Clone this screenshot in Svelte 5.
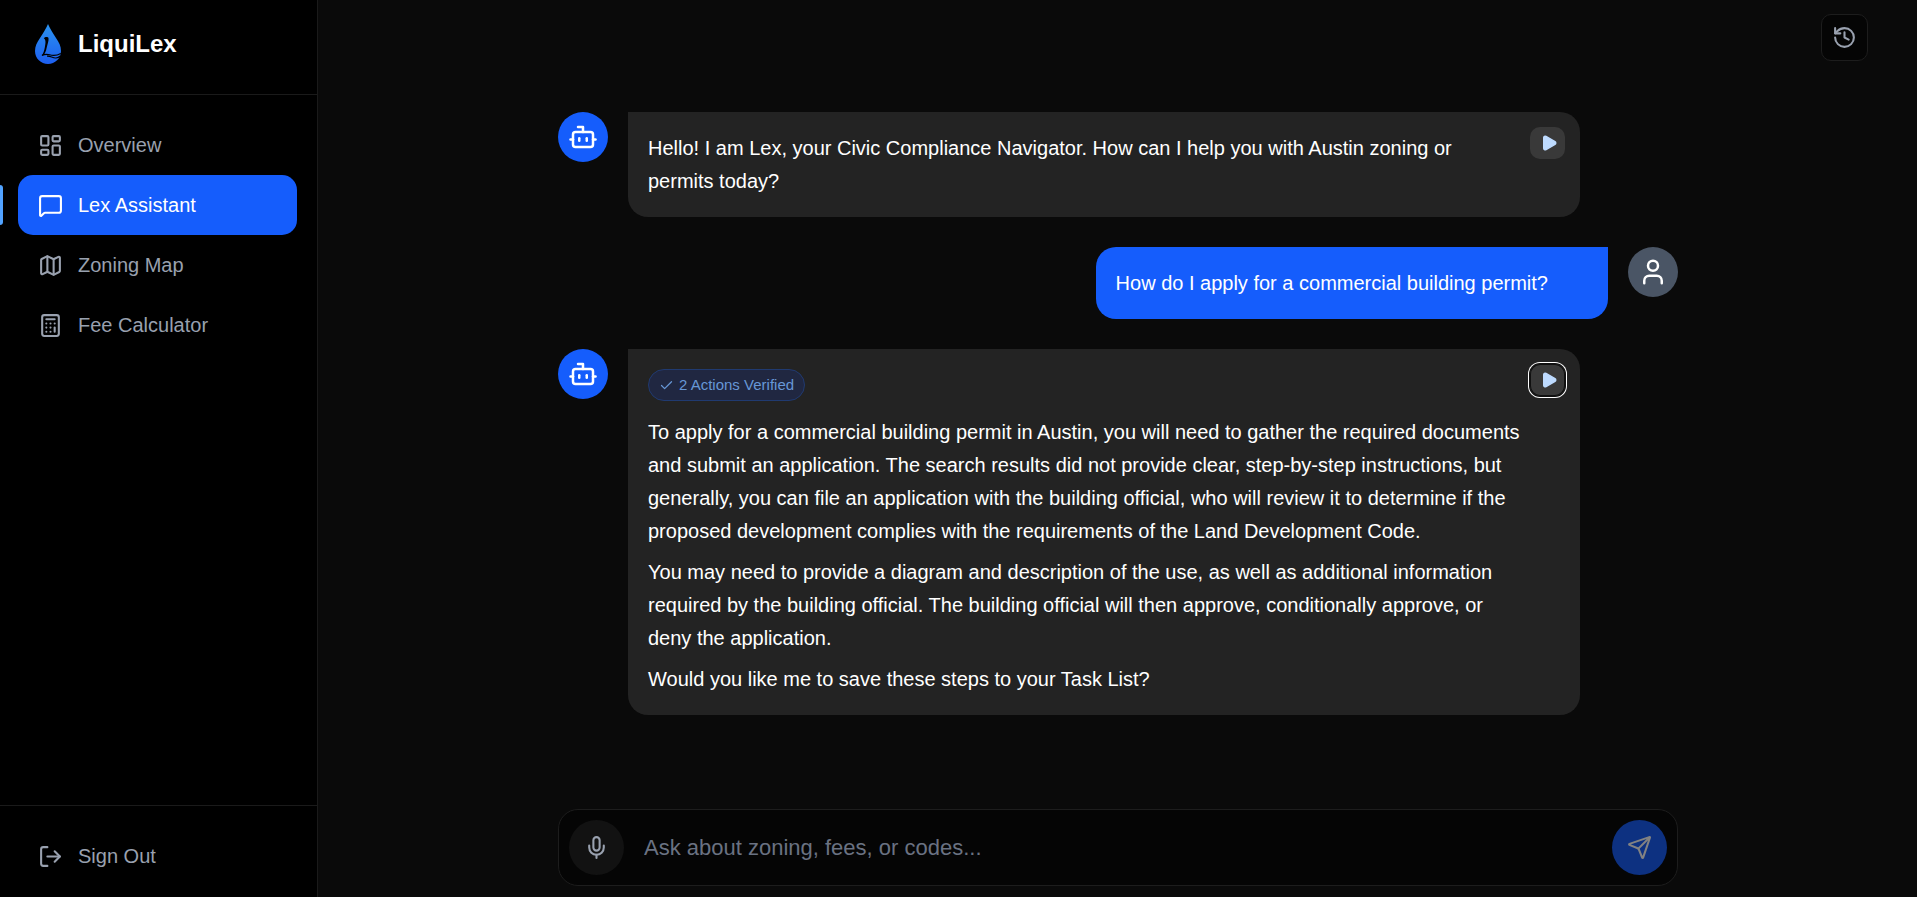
<script>
  const icons = {
    overview:
      '<rect width="7" height="9" x="3" y="3" rx="1"/><rect width="7" height="5" x="14" y="3" rx="1"/><rect width="7" height="9" x="14" y="12" rx="1"/><rect width="7" height="5" x="3" y="16" rx="1"/>',
    chat: '<path d="M22 17a2 2 0 0 1-2 2H6.828a2 2 0 0 0-1.414.586l-2.202 2.202A.71.71 0 0 1 2 21.286V5a2 2 0 0 1 2-2h16a2 2 0 0 1 2 2z"/>',
    map: '<path d="M14.106 5.553a2 2 0 0 0 1.788 0l3.659-1.83A1 1 0 0 1 21 4.619v12.764a1 1 0 0 1-.553.894l-4.553 2.277a2 2 0 0 1-1.788 0l-4.212-2.106a2 2 0 0 0-1.788 0l-3.659 1.83A1 1 0 0 1 3 19.381V6.618a1 1 0 0 1 .553-.894l4.553-2.277a2 2 0 0 1 1.788 0z"/><path d="M15 5.764v15"/><path d="M9 3.236v15"/>',
    calculator:
      '<rect width="16" height="20" x="4" y="2" rx="2"/><path d="M8 6h8"/><path d="M16 14v4"/><path d="M16 10h.01"/><path d="M12 10h.01"/><path d="M8 10h.01"/><path d="M12 14h.01"/><path d="M8 14h.01"/><path d="M12 18h.01"/><path d="M8 18h.01"/>',
    logout:
      '<path d="M9 21H5a2 2 0 0 1-2-2V5a2 2 0 0 1 2-2h4"/><path d="m16 17 5-5-5-5"/><path d="M21 12H9"/>',
    history:
      '<path d="M3 12a9 9 0 1 0 9-9 9.75 9.75 0 0 0-6.74 2.74L3 8"/><path d="M3 3v5h5"/><path d="M12 7v5l4 2"/>',
    bot: '<path d="M12 8V4H8"/><rect width="16" height="12" x="4" y="8" rx="2"/><path d="M2 14h2"/><path d="M20 14h2"/><path d="M15 13v2"/><path d="M9 13v2"/>',
    user: '<path d="M19 21v-2a4 4 0 0 0-4-4H9a4 4 0 0 0-4 4v2"/><circle cx="12" cy="7" r="4"/>',
    play: '<path fill="currentColor" d="M5 5a2 2 0 0 1 3.008-1.728l11.997 6.998a2 2 0 0 1 .003 3.458l-12 7A2 2 0 0 1 5 19z"/>',
    check: '<path d="M20 6 9 17l-5-5"/>',
    mic: '<path d="M12 19v3"/><path d="M19 10v2a7 7 0 0 1-14 0v-2"/><rect x="9" y="2" width="6" height="13" rx="3"/>',
    send: '<path d="M14.536 21.686a.5.5 0 0 0 .937-.024l6.5-19a.496.496 0 0 0-.635-.635l-19 6.5a.5.5 0 0 0-.024.937l7.93 3.18a2 2 0 0 1 1.112 1.11z"/><path d="m21.854 2.147-10.94 10.939"/>'
  };

  const nav = [
    { label: 'Overview', icon: 'overview' },
    { label: 'Lex Assistant', icon: 'chat' },
    { label: 'Zoning Map', icon: 'map' },
    { label: 'Fee Calculator', icon: 'calculator' }
  ];
  let current = $state('Lex Assistant');
  let draft = $state('');

  const messages = [
    {
      from: 'bot',
      text: [
        'Hello! I am Lex, your Civic Compliance Navigator. How can I help you with Austin zoning or permits today?'
      ]
    },
    { from: 'user', text: ['How do I apply for a commercial building permit?'] },
    {
      from: 'bot',
      badge: '2 Actions Verified',
      focused: true,
      text: [
        'To apply for a commercial building permit in Austin, you will need to gather the required documents and submit an application. The search results did not provide clear, step-by-step instructions, but generally, you can file an application with the building official, who will review it to determine if the proposed development complies with the requirements of the Land Development Code.',
        'You may need to provide a diagram and description of the use, as well as additional information required by the building official. The building official will then approve, conditionally approve, or deny the application.',
        'Would you like me to save these steps to your Task List?'
      ]
    }
  ];
</script>

{#snippet icon(name, size = 25)}
  <svg
    width={size}
    height={size}
    viewBox="0 0 24 24"
    fill="none"
    stroke="currentColor"
    stroke-width="2"
    stroke-linecap="round"
    stroke-linejoin="round"
    aria-hidden="true">{@html icons[name]}</svg>
{/snippet}

<div class="app">
  <aside class="sidebar">
    <div class="brand">
      <svg width="26" height="40" viewBox="0 0 26 40" aria-hidden="true">
        <defs>
          <linearGradient id="drop" x1="0" y1="0" x2="0" y2="1">
            <stop offset="0" stop-color="#2b93f0" />
            <stop offset="1" stop-color="#1d5ff0" />
          </linearGradient>
        </defs>
        <path
          fill="url(#drop)"
          d="M13 0C15 5 18 9 21 14C24 18.500 26 22 26 27C26 34.500 20 40 13 40C6 40 0 34.500 0 27C0 22 2 18.500 5 14C8 9 11 5 13 0Z" />
        <path
          fill="#000"
          d="M8.800 14.200C10 12.700 12.800 12.400 13.500 14C14 17 12.300 20.500 11.600 24C11 27 10 29.500 8.600 31L6.600 31.800C8.300 29.500 9.300 26.500 9.800 23.500C10.400 20 11.400 16 8.800 14.200Z" />
        <path
          fill="none"
          stroke="#000"
          stroke-width="1.200"
          d="M7 31.400C9.500 30.200 12 30 14.500 30.800C18.500 32 22 31.600 25.800 29.400M12 32.100C15.500 31.600 17.500 34.300 21 34C22.800 33.800 24 33.200 25.300 32" />
      </svg>
      <span>LiquiLex</span>
    </div>

    <nav aria-label="Main">
      {#each nav as item}
        <a
          href="#{item.icon}"
          class="item"
          class:active={item.label === current}
          aria-current={item.label === current ? 'page' : undefined}
          onclick={() => (current = item.label)}>
          {@render icon(item.icon)}
          <span>{item.label}</span>
        </a>
      {/each}
    </nav>

    <div class="foot">
      <button type="button" class="item">
        {@render icon('logout')}
        <span>Sign Out</span>
      </button>
    </div>
  </aside>

  <main>
    <header>
      <button type="button" class="history" aria-label="Chat history">{@render icon('history')}</button>
    </header>

    <section class="chat" aria-label="Conversation">
      {#each messages as m}
        <article class="message {m.from}">
          <div class="avatar">{@render icon(m.from, 30)}</div>
          <div class="bubble">
            {#if m.badge}
              <div class="badge">{@render icon('check', 15)}<span>{m.badge}</span></div>
            {/if}
            <div class="text">
              {#each m.text as p}<p>{p}</p>{/each}
            </div>
            {#if m.from === 'bot'}
              <button type="button" class="play" class:focused={m.focused} aria-label="Play message">
                {@render icon('play', 18)}
              </button>
            {/if}
          </div>
        </article>
      {/each}
    </section>

    <form class="composer" onsubmit={(e) => e.preventDefault()}>
      <button type="button" class="round mic" aria-label="Voice input">{@render icon('mic')}</button>
      <input
        type="text"
        aria-label="Message"
        placeholder="Ask about zoning, fees, or codes..."
        bind:value={draft} />
      <button type="submit" class="round send" aria-label="Send" disabled={!draft}>
        {@render icon('send')}
      </button>
    </form>
  </main>
</div>

<style>
  :global(body) {
    background: #0a0a0a;
  }
  .app,
  .app * {
    box-sizing: border-box;
  }
  .app {
    display: grid;
    grid-template-columns: 318px minmax(0, 1fr);
    column-gap: 1px;
    min-height: 100vh;
    color: #fff;
    font: 20px/30px 'Liberation Sans', Arial, sans-serif;
  }
  svg {
    display: block;
    flex: none;
  }
  button,
  input {
    margin: 0;
    padding: 0;
    border: 0;
    background: none;
    color: inherit;
    font: inherit;
  }
  button {
    cursor: pointer;
  }

  .sidebar {
    display: flex;
    flex-direction: column;
    background: #000;
    border-right: 1px solid #1a1a1a;
  }
  .brand {
    display: flex;
    align-items: center;
    gap: 17px;
    height: 95px;
    padding: 0 35px 6px;
    border-bottom: 1px solid #1a1a1a;
    font-size: 24px;
    font-weight: 700;
  }
  nav {
    flex: 1;
    padding: 20px 20px 20px 18px;
  }
  .item {
    position: relative;
    display: flex;
    align-items: center;
    gap: 15px;
    width: 100%;
    height: 60px;
    padding: 0 20px;
    border-radius: 15px;
    color: #99a1af;
    text-align: left;
    text-decoration: none;
  }
  .active {
    background: #155dfc;
    color: #fff;
  }
  .active::before {
    content: '';
    position: absolute;
    left: -18px;
    top: 10px;
    width: 3px;
    height: 40px;
    border-radius: 0 3px 3px 0;
    background: #51a2ff;
  }
  .foot {
    padding: 20px 20px 11px 18px;
    border-top: 1px solid #1a1a1a;
  }

  main {
    display: flex;
    flex-direction: column;
  }
  header {
    display: flex;
    justify-content: flex-end;
    padding: 14px 49px 0;
  }
  .history {
    display: grid;
    place-items: center;
    width: 47px;
    height: 47px;
    border: 1px solid #1d1d1d;
    border-radius: 10px;
    background: #050505;
    color: #99a1af;
  }
  .chat {
    flex: 1;
    display: flex;
    flex-direction: column;
    gap: 30px;
    width: 100%;
    max-width: 1120px;
    margin: 0 auto;
    padding: 51px 0 30px;
  }
  .message {
    display: flex;
    gap: 20px;
  }
  .user {
    flex-direction: row-reverse;
  }
  .avatar {
    display: grid;
    place-items: center;
    flex: none;
    width: 50px;
    height: 50px;
    border-radius: 50%;
    background: #155dfc;
  }
  .user .avatar {
    background: #4a5565;
  }
  .bubble {
    position: relative;
    max-width: 85%;
    padding: 20px 60px 19px 20px;
    border-radius: 0 20px 20px 20px;
    background: #232323;
  }
  .user .bubble {
    border-radius: 20px 0 20px 20px;
    background: #155dfc;
  }
  .text {
    display: flex;
    flex-direction: column;
    gap: 8px;
    line-height: 33px;
  }
  p {
    margin: 0;
  }
  .badge {
    display: flex;
    align-items: center;
    gap: 5px;
    width: fit-content;
    height: 32px;
    margin-bottom: 15px;
    padding: 0 10px;
    border: 1px solid #203a70;
    border-radius: 16px;
    background: #202741;
    color: #6797d6;
    font-size: 15px;
    line-height: 20px;
  }
  .play {
    position: absolute;
    top: 15px;
    right: 15px;
    display: grid;
    place-items: center;
    width: 35px;
    height: 32px;
    padding-left: 3px;
    border-radius: 10px;
    background: #393939;
    color: #bedbff;
  }
  .focused {
    box-shadow:
      inset 0 0 0 1px #101010,
      0 0 0 1px #101010,
      0 0 0 2px #fff;
  }

  .composer {
    display: flex;
    align-items: center;
    gap: 20px;
    width: 100%;
    max-width: 1120px;
    margin: 0 auto 11px;
    padding: 10px;
    border: 1px solid #1d1d1d;
    border-radius: 20px;
    background: #050505;
  }
  .composer input {
    flex: 1;
    min-width: 0;
    height: 55px;
    outline: 0;
    font-size: 22px;
  }
  .composer input::placeholder {
    color: #6a7282;
    opacity: 1;
  }
  .round {
    display: grid;
    place-items: center;
    flex: none;
    width: 55px;
    height: 55px;
    border-radius: 50%;
  }
  .mic {
    background: #121212;
    color: #99a1af;
  }
  .send {
    background: #155dfc;
  }
  .send:disabled {
    background: #0d3181;
    color: #828282;
  }
</style>
